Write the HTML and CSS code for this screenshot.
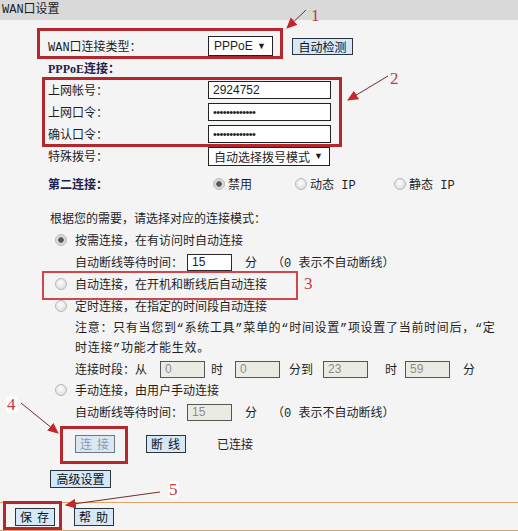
FILE: index.html
```html
<!DOCTYPE html>
<html lang="zh-CN">
<head>
  <meta charset="UTF-8">
  <meta name="viewport" content="width=device-width, initial-scale=1.0">
  <title>WAN口设置</title>
  <link rel="stylesheet" href="styles.css">
</head>
<body>
<div class="page">
  <div class="title">WAN口设置</div>

  <form class="form">
    <div class="row">
      <span class="label">WAN口连接类型：</span>
      <div class="select sel-type">PPPoE<span class="caret">▼</span></div>
      <button type="button" class="btn btn-detect">自动检测</button>
    </div>
    <div class="row"><b class="label strong">PPPoE连接：</b></div>
    <div class="row">
      <span class="label">上网帐号：</span>
      <input class="field" type="text" value="2924752">
    </div>
    <div class="row">
      <span class="label">上网口令：</span>
      <input class="field" type="password" value="1234567890123">
    </div>
    <div class="row">
      <span class="label">确认口令：</span>
      <input class="field" type="password" value="1234567890123">
    </div>
    <div class="row">
      <span class="label">特殊拨号：</span>
      <div class="select sel-dial">自动选择拨号模式<span class="caret">▼</span></div>
    </div>
    <div class="row row-second">
      <b class="label strong">第二连接：</b>
      <label class="choice choice-1"><input type="radio" name="second" checked>禁用</label>
      <label class="choice choice-2"><input type="radio" name="second">动态 IP</label>
      <label class="choice"><input type="radio" name="second">静态 IP</label>
    </div>

    <div class="modes">
      <div class="row intro">根据您的需要，请选择对应的连接模式：</div>

      <label class="row opt"><input type="radio" name="mode" checked>按需连接，在有访问时自动连接</label>
      <div class="row sub">
        自动断线等待时间：<input class="small" type="text" value="15"><span class="unit">分</span><span class="hint">（0 表示不自动断线）</span>
      </div>

      <label class="row opt"><input type="radio" name="mode">自动连接，在开机和断线后自动连接</label>

      <label class="row opt"><input type="radio" name="mode">定时连接，在指定的时间段自动连接</label>
      <p class="note">注意：只有当您到“系统工具”菜单的“时间设置”项设置了当前时间后，“定时连接”功能才能生效。</p>
      <div class="row sub times">
        连接时段：从<input class="small off t1" type="text" value="0" disabled><span class="t-a">时</span><input class="small off t2" type="text" value="0" disabled><span class="t-b">分到</span><input class="small off t3" type="text" value="23" disabled><span class="t-c">时</span><input class="small off t4" type="text" value="59" disabled><span class="t-d">分</span>
      </div>

      <label class="row opt"><input type="radio" name="mode">手动连接，由用户手动连接</label>
      <div class="row sub">
        自动断线等待时间：<input class="small off" type="text" value="15" disabled><span class="unit">分</span><span class="hint">（0 表示不自动断线）</span>
      </div>

      <div class="actions">
        <button type="button" class="btn btn-sm" disabled>连接</button>
        <button type="button" class="btn btn-sm">断线</button>
        <span>已连接</span>
      </div>
    </div>

    <div class="advanced"><button type="button" class="btn btn-adv">高级设置</button></div>
  </form>

  <div class="footer">
    <button type="button" class="btn btn-sm">保存</button>
    <button type="button" class="btn btn-sm">帮助</button>
  </div>

  <!-- tutorial marks drawn over the form -->
  <div class="mark mark-1"></div>
  <div class="mark mark-2"></div>
  <div class="mark mark-3"></div>
  <div class="mark mark-4"></div>
  <div class="mark mark-5"></div>
  <span class="num num-1">1</span>
  <span class="num num-2">2</span>
  <span class="num num-3">3</span>
  <span class="num num-4">4</span>
  <span class="num num-5">5</span>
  <svg class="arrows" width="518" height="531" viewBox="0 0 518 531">
    <defs>
      <marker id="head" viewBox="0 0 10 10" refX="9" refY="5" markerWidth="11" markerHeight="11" markerUnits="userSpaceOnUse" orient="auto">
        <path d="M0 0.5L10 5L0 9.5z" fill="#c4262c"/>
      </marker>
    </defs>
    <line x1="306" y1="10" x2="287" y2="28" marker-end="url(#head)"/>
    <line x1="388" y1="76" x2="348" y2="100" marker-end="url(#head)"/>
    <line x1="21" y1="403" x2="58" y2="433" marker-end="url(#head)"/>
    <line x1="160" y1="492" x2="66" y2="505" marker-end="url(#head)"/>
  </svg>
</div>
</body>
</html>
```

FILE: styles.css
```css
html, body {margin: 0; height: 100%; overflow: hidden}
body {
  background: #f4f4f4;
  color: #1e1e1e;
  font: 12px "Liberation Mono", "Noto Sans CJK SC", monospace;
}
.page {
  position: relative;
  width: 518px;
  height: 531px;
}

.title {
  height: 20px;
  line-height: 20px;
  padding-left: 2px;
  background: #d9d9d9;
}

/* form rows */
.form {
  padding: 15px 0 0 48px;
}
.row {
  display: flex;
  align-items: center;
  height: 22px;
  white-space: nowrap;
}
.label {
  width: 160px;
  flex: none;
}
.strong {
  font-family: "Liberation Serif", "Noto Sans CJK SC", serif;
  font-weight: bold;
  color: #22224a;
}
.field {
  box-sizing: border-box;
  width: 123px;
  height: 18px;
  margin: 0;
  padding: 0 4px;
  border: 1px solid #222;
  background: #fff;
  color: #222;
  font: 12px "Liberation Sans", sans-serif;
}
.field[type=password] {
  letter-spacing: -0.6px;
  font-size: 11px;
}
.select {
  box-sizing: border-box;
  display: flex;
  align-items: center;
  justify-content: space-between;
  height: 20px;
  padding: 0 6px 0 5px;
  border: 1px solid #222;
  background: #fff;
  font: 12px "Liberation Sans", "Noto Sans CJK SC", sans-serif;
}
.caret {font-size: 9px;}
.sel-type {width: 65px;}
.sel-dial {width: 122px; height: 19px;}

.row-second {
  height: 22px;
  margin-top: 6px;
}
.choice {
  display: flex;
  align-items: center;
  gap: 3px;
}
.choice-1 {margin-left: 5px; width: 82px;}
.choice-2 {width: 99px;}

input[type=radio] {
  -webkit-appearance: none;
  appearance: none;
  width: 12px;
  height: 12px;
  margin: 0;
  border: 1px solid #b9b9b9;
  border-radius: 50%;
  background: radial-gradient(circle at 45% 40%, #fdfdfd, #d4d4d4);
  box-sizing: border-box;
}
input[type=radio]:checked {
  background: radial-gradient(circle, #555 0 2.4px, #c9c9c9 3px, #f2f2f2 6px);
}

/* connection modes */
.modes {padding-left: 2px;}
.intro {margin-top: 12px;}
.opt {
  gap: 8px;
  padding-left: 5px;
}
.sub {padding-left: 25px;}
.small {
  box-sizing: border-box;
  width: 45px;
  height: 17px;
  margin: 0 0 0 4px;
  padding: 0 4px;
  border: 1px solid #2a2a2a;
  background: #fff;
  color: #222;
  font: 12px "Liberation Sans", sans-serif;
}
.small.off {
  background: #ecebe3;
  color: #8b8b8b;
  border-color: #555;
}
.unit {margin-left: 13px;}
.hint {margin-left: 15px;}

.note {
  width: 425px;
  margin: 0;
  padding: 2px 0 0 25px;
  line-height: 20px;
  letter-spacing: 0.7px;
}
.times {height: 20px;}
.t1 {margin-left: 13px;}
.t-a {margin-left: 6px;}
.t2 {margin-left: 12px;}
.t-b {margin-left: 9px;}
.t3 {margin-left: 10px;}
.t-c {margin-left: 17px;}
.t4 {margin-left: 8px;}
.t-d {margin-left: 13px;}

/* buttons */
.btn {
  box-sizing: border-box;
  height: 18px;
  margin: 0;
  padding: 0;
  border: 1px solid #2c3440;
  background: #d5e8f8;
  color: #111;
  font: 12px "Noto Sans CJK SC", sans-serif;
  line-height: 16px;
}
.btn:disabled {
  color: #8f9aa6;
  border-color: #6d7884;
  background: #dae8f3;
}
.btn-detect {
  width: 61px;
  height: 17px;
  margin-left: 19px;
}
.btn-sm {
  width: 40px;
  padding-left: 4px;
  letter-spacing: 5px;
}
.btn-adv {width: 61px;}

.actions {
  display: flex;
  align-items: center;
  gap: 31px;
  height: 18px;
  margin-top: 12px;
  padding-left: 25px;
}
.advanced {
  margin-top: 17px;
  padding-left: 2px;
  height: 18px;
}

.footer {
  display: flex;
  gap: 19px;
  margin-top: 14px;
  padding: 5px 0 4px 15px;
  border-top: 1px solid #dba467;
  border-bottom: 1px solid #dba467;
}

/* red tutorial marks */
.mark {
  position: absolute;
  box-sizing: border-box;
  border: 3px solid #b4272d;
  pointer-events: none;
}
.mark-1 {left: 37px; top: 28px; width: 246px; height: 31px;}
.mark-2 {left: 42px; top: 77px; width: 300px; height: 70px;}
.mark-3 {left: 42px; top: 271px; width: 256px; height: 29px; border: 2px solid #d0464b;}
.mark-4 {left: 60px; top: 426px; width: 68px; height: 38px;}
.mark-5 {left: 3px; top: 501px; width: 59px; height: 29px;}

.num {
  position: absolute;
  font: 17px "Liberation Serif", serif;
  color: #c23a3e;
  line-height: 1;
}
.num-1 {left: 311px; top: 7px;}
.num-2 {left: 390px; top: 70px;}
.num-3 {left: 304px; top: 275px;}
.num-4 {left: 6px; top: 396px; background: #fff; border-radius: 4px; padding: 0 1px;}
.num-5 {left: 168px; top: 481px; background: #fff; border-radius: 4px; padding: 0 1px;}

.arrows {
  position: absolute;
  left: 0;
  top: 0;
  pointer-events: none;
}
.arrows line {
  stroke: #7a2a2a;
  stroke-width: 1;
}
```
